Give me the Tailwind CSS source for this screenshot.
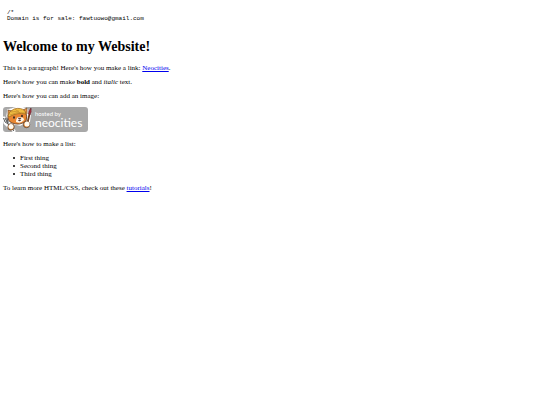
<!DOCTYPE html>
<html lang="en">
<head>
    <meta charset="UTF-8">
    <meta name="viewport" content="width=device-width, initial-scale=1.0">
    <title>My Website</title>
    <script src="https://cdn.jsdelivr.net/npm/@tailwindcss/browser@4"></script>
</head>
<body class="bg-white px-[3px] text-[7px] leading-[8px] text-black font-['Liberation_Serif',serif]">
    <pre class="mt-[10px] ml-1 text-[6px] leading-[6px] font-['Liberation_Mono',monospace]">/*
Domain is for sale: fawtuowo@gmail.com</pre>

    <h1 class="mt-[17px] text-[14px] leading-[16px] font-bold">Welcome to my Website!</h1>

    <div class="mt-[9px] space-y-[6px]">
        <p>This is a paragraph! Here's how you make a link: <a href="https://neocities.org" class="text-[#0000ee] underline">Neocities</a>.</p>
        <p>Here's how you can make <strong class="font-bold">bold</strong> and <em>italic</em> text.</p>
        <p>Here's how you can add an image:</p>
    </div>

    <!-- Hosting badge -->
    <svg class="mt-[7px] w-[85px] h-[25px]" viewBox="0 0 85 25" role="img" aria-label="Hosted by Neocities">
        <rect width="85" height="25" rx="3" fill="#a8a8a8"/>
        <!-- White outline around the artwork -->
        <path d="M4 9 L5 3 L9 2 Q16 -1 24 2 L26 7 L25 14 L17 18 L7 16Z" fill="#fff" stroke="#fff" stroke-width="1.500" stroke-linejoin="round"/>
        <path d="M1 11 L2 16 L6 20 L11 24 M27 4 L25 18" fill="none" stroke="#fff" stroke-width="3" stroke-linecap="round"/>
        <!-- Cat -->
        <path d="M5 8 Q4 14 9 16 Q17 19 23 14 Q25 9 22 4 L9 4Z" fill="#ea8732" stroke="#57351f" stroke-width=".8"/>
        <path d="M5 8 L5 3 L9 4 M20 3 L24 1 L24 7" fill="#ed9848" stroke="#6b421f" stroke-width=".7"/>
        <path d="M13 14 Q13 12 15 10 L17 10 Q21 10 21 13 Q18 17 13 15Z" fill="#fff5e5"/>
        <path d="M5 9 Q6 4 11 2 Q18 0 22 4 L23 7 Q14 5 6 10Z" fill="#f0bd42" stroke="#98641e" stroke-width=".7"/>
        <path d="M8 5 L16 4 M12 2 L17 6 M7 8 Q14 4 22 6" fill="none" stroke="#bd8528" stroke-width=".6"/>
        <ellipse cx="11" cy="10.500" rx=".9" ry="1.200" fill="#352923"/>
        <ellipse cx="19" cy="9" rx=".9" ry="1.200" fill="#352923"/>
        <path d="M15 11 h3 l-1 1.500Z M15 13 Q17 15 18 13" fill="#593031" stroke="#593031" stroke-width=".5"/>
        <!-- Fork and brush -->
        <path d="M0.500 11 L2 15 Q4 17 5 15 L4 11 M2 11 L4 15 M4 16 L11 24" fill="none" stroke="#5b5b5b" stroke-width="1"/>
        <path d="M26.500 7 L24 18" fill="none" stroke="#714020" stroke-width="1.800"/>
        <path d="M25.500 7 Q25.500 3 28 1 Q29 5 27 8Z" fill="#a82f3d" stroke="#53252b" stroke-width=".6"/>
        <circle cx="8" cy="20" r="3.200" fill="#eb9140" stroke="#4b3325" stroke-width=".7"/>
        <circle cx="8" cy="19.500" r="2.500" fill="#fff9ef"/>
        <circle cx="23.500" cy="17.500" r="3.200" fill="#eb9140" stroke="#4b3325" stroke-width=".7"/>
        <circle cx="24" cy="17" r="2.500" fill="#fff9ef"/>
        <text x="32" y="9" font-size="6" fill="#fff" class="font-['Lato',sans-serif]">hosted by</text>
        <text x="32" y="20" font-size="12" fill="#fff" class="font-['Lato',sans-serif]">neocities</text>
    </svg>

    <p class="mt-[8px]">Here's how to make a list:</p>

    <ul class="mt-[6px] pl-[10px]">
        <li class="flex items-center gap-[5px] before:size-[2px] before:rounded-full before:bg-black">First thing</li>
        <li class="flex items-center gap-[5px] before:size-[2px] before:rounded-full before:bg-black">Second thing</li>
        <li class="flex items-center gap-[5px] before:size-[2px] before:rounded-full before:bg-black">Third thing</li>
    </ul>

    <p class="mt-[6px]">To learn more HTML/CSS, check out these <a href="https://neocities.org/tutorials" class="text-[#0000ee] underline">tutorials</a>!</p>
</body>
</html>
